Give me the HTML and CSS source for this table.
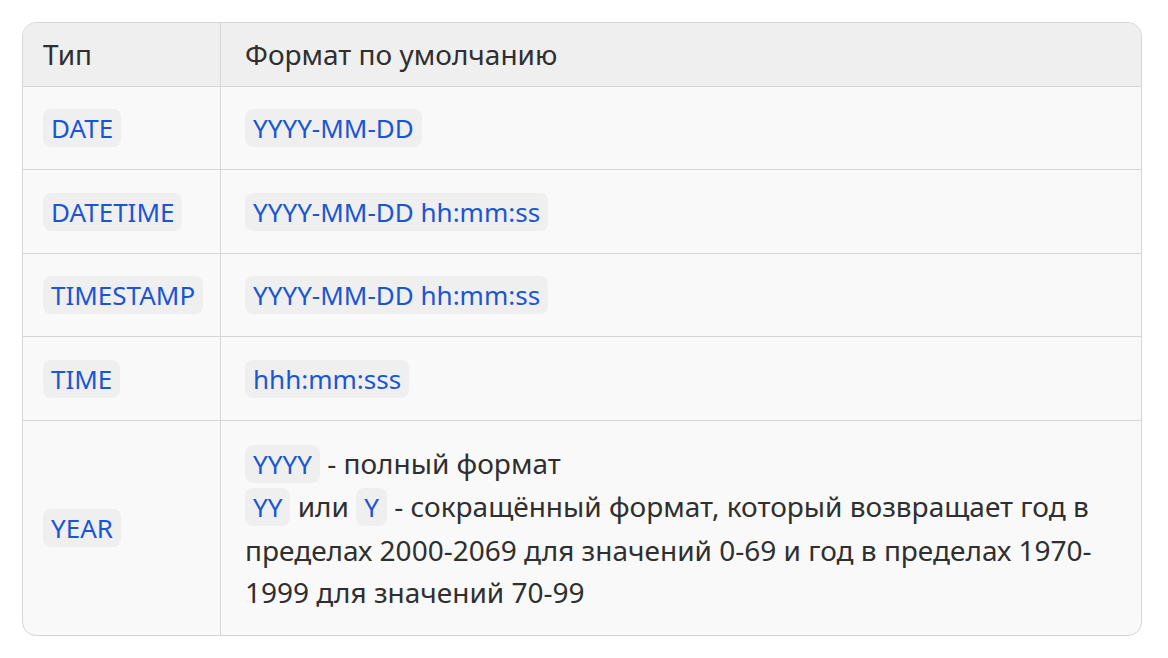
FILE: index.html
```html
<!DOCTYPE html>
<html lang="ru">
<head>
<meta charset="utf-8">
<link rel="stylesheet" href="styles.css">
</head>
<body>
<div class="wrap">
<table class="tbl">
<thead>
<tr><th class="c1">Тип</th><th class="c2">Формат по умолчанию</th></tr>
</thead>
<tbody>
<tr><td class="c1"><code>DATE</code></td><td class="c2"><code>YYYY-MM-DD</code></td></tr>
<tr><td class="c1"><code>DATETIME</code></td><td class="c2"><code>YYYY-MM-DD hh:mm:ss</code></td></tr>
<tr><td class="c1"><code>TIMESTAMP</code></td><td class="c2"><code>YYYY-MM-DD hh:mm:ss</code></td></tr>
<tr><td class="c1"><code>TIME</code></td><td class="c2"><code>hhh:mm:sss</code></td></tr>
<tr class="last"><td class="c1"><code>YEAR</code></td><td class="c2"><code>YYYY</code> - полный формат<br><code>YY</code> или <code>Y</code> - сокращённый формат, который возвращает год в пределах 2000-2069 для значений 0-69 и год в пределах 1970-1999 для значений 70-99</td></tr>
</tbody>
</table>
</div>
</body>
</html>
```
FILE: styles.css
```css
html, body { margin: 0; padding: 0; background: #fff; }
.wrap { padding: 22px 26px 22px 22px; }
.tbl {
  width: 100%;
  table-layout: fixed;
  border-collapse: separate;
  border-spacing: 0;
  border: 1px solid #d6d6d6;
  border-radius: 14px;
  overflow: hidden;
  font-family: "Noto Sans", sans-serif;
  font-size: 28px;
  line-height: 42.5px;
  color: #2f2f2f;
  background: #f9f9f9;
}
.tbl th, .tbl td { box-sizing: border-box; }
.tbl th {
  background: #efefef;
  font-weight: 400;
  text-align: left;
  padding: 10px 18px 10px 20px;
  border-bottom: 1px solid #d6d6d6;
}
.tbl td {
  padding: 19.5px 18px 19.5px 20px;
  border-top: 1px solid #d6d6d6;
  vertical-align: middle;
}
.tbl tbody tr:first-child td { border-top: 0; }
.tbl tr.last td { padding-top: 21px; padding-bottom: 21px; }
.tbl .c1 { width: 198px; border-right: 1px solid #d6d6d6; }
.tbl .c2 { padding-left: 24px; padding-right: 24px; }
code {
  font-family: "Noto Sans", sans-serif;
  font-size: 26px;
  color: #1a56d4;
  background: #efefef;
  border-radius: 8px;
  padding: 1px 8px;
}
```
